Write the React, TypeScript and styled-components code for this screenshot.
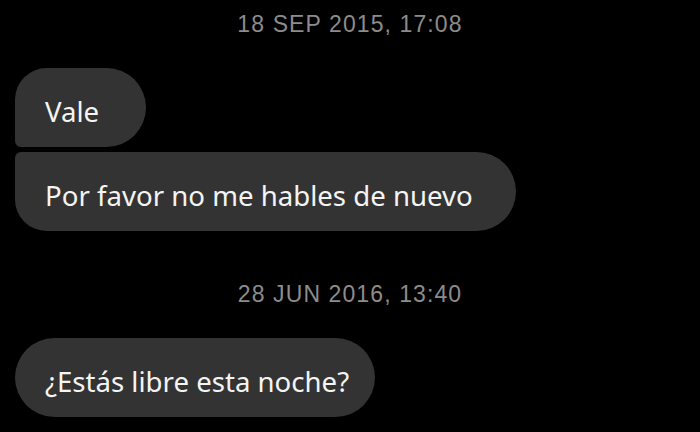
import React from "react"
import styled, { createGlobalStyle } from "styled-components"

const GlobalStyle = createGlobalStyle`
  html, body {
    margin: 0;
    padding: 0;
    background: #000;
  }
`

type Corner = "first" | "last" | "single"

const messages: { date: string; items: { text: string; pad: number }[] }[] = [
  {
    date: "18 SEP 2015, 17:08",
    items: [
      { text: "Vale", pad: 47 },
      { text: "Por favor no me hables de nuevo", pad: 43 },
    ],
  },
  { date: "28 JUN 2016, 13:40", items: [{ text: "¿Estás libre esta noche?", pad: 26 }] },
]

function App(): JSX.Element {
  return (
    <>
      <GlobalStyle />
      <Screen>
        {messages.map((group, gi) => (
          <Group key={group.date} $first={gi === 0}>
            <Stamp>{group.date}</Stamp>
            <Bubbles>
              {group.items.map((item, i) => {
                let corner: Corner = "single"
                if (group.items.length > 1) corner = i === 0 ? "first" : "last"
                return (
                  <Bubble key={item.text} $corner={corner} $pad={item.pad}>
                    {item.text}
                  </Bubble>
                )
              })}
            </Bubbles>
          </Group>
        ))}
      </Screen>
    </>
  )
}

const Screen = styled.div`
  width: 700px;
  height: 432px;
  background: #000;
  overflow: hidden;
  display: flex;
  flex-direction: column;
  padding: 0 15px;
  box-sizing: border-box;
`

const Group = styled.section<{ $first: boolean }>`
  display: flex;
  flex-direction: column;
  padding-top: ${(p) => (p.$first ? "0" : "39px")};
`

const Stamp = styled.div`
  height: 44px;
  line-height: 44px;
  margin-top: 2px;
  margin-bottom: 22px;
  text-align: center;
  color: #8c8c8c;
  font-family: "Liberation Sans", Arial, sans-serif;
  font-size: 23px;
  letter-spacing: 1.1px;
`

const Bubbles = styled.div`
  display: flex;
  flex-direction: column;
  align-items: flex-start;
  gap: 5px;
`

const Bubble = styled.div<{ $corner: Corner; $pad: number }>`
  height: 79px;
  box-sizing: border-box;
  display: flex;
  align-items: center;
  padding: 6px ${(p) => p.$pad}px 0 30px;
  background: #333333;
  color: #f4f4f4;
  font-family: "Noto Sans", "Open Sans", sans-serif;
  font-size: 27.6px;
  border-radius: ${(p) =>
    p.$corner === "first"
      ? "32px 40px 40px 6px"
      : p.$corner === "last"
      ? "6px 40px 40px 32px"
      : "40px"};
`

export default App
